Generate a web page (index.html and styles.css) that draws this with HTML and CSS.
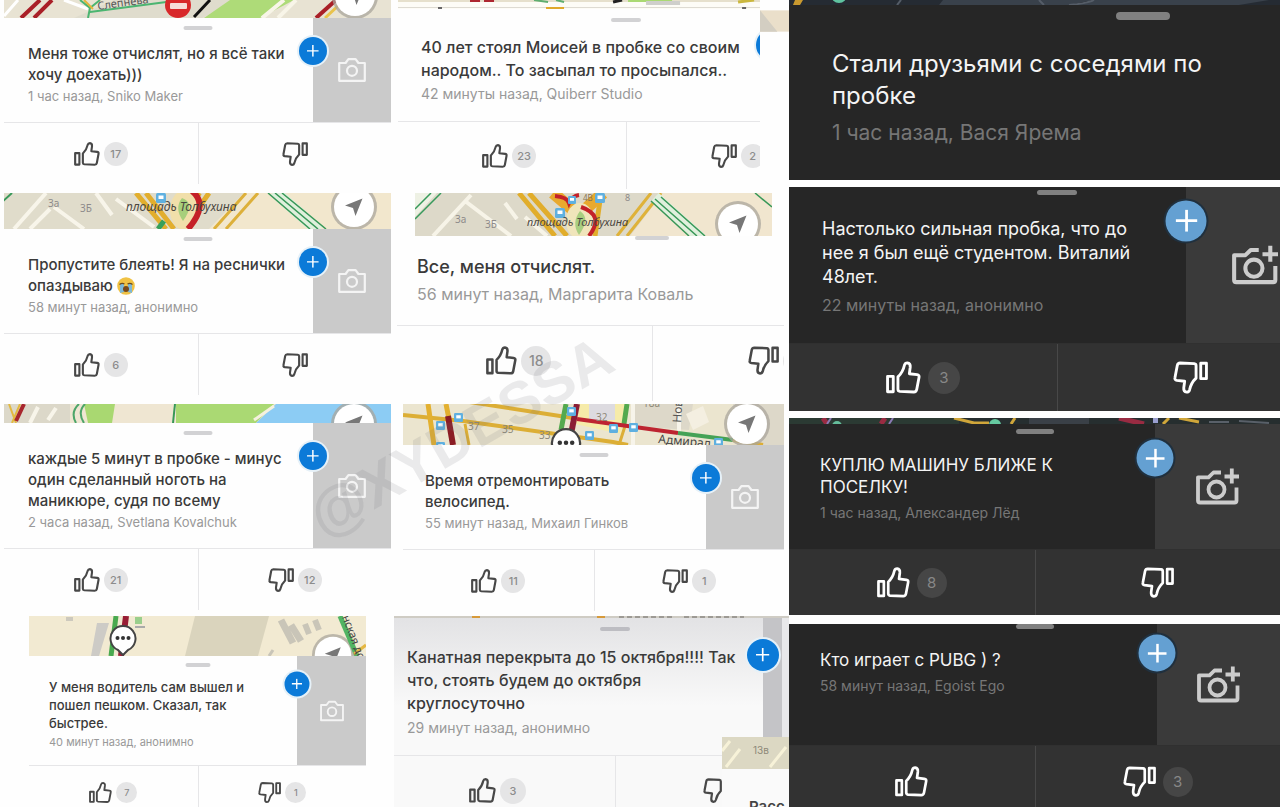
FILE: index.html
```html
<!DOCTYPE html>
<html lang="ru">
<head>
<meta charset="utf-8">
<meta name="viewport" content="width=device-width, initial-scale=1">
<title>Разговорчики</title>
<link rel="stylesheet" href="styles.css">
</head>
<body>
<svg class="defs" aria-hidden="true">
  <symbol id="thumb" viewBox="0 0 27 25">
    <g fill="none" stroke="currentColor" stroke-width="2.2" stroke-linejoin="round">
      <rect x="1.2" y="11.600" width="4.400" height="11.900"/>
      <path d="M9.200 12Q13 8.500 14.200 3Q14.700 1.200 16.500 1.200Q19 1.500 18.700 4.500L18 9.600L24 10.300Q25.900 10.600 25.500 12.300L23.700 21.800Q23.300 23.700 21.500 23.700L10.600 23.200Q9.200 23 9.200 21.600Z"/>
    </g>
  </symbol>
  <symbol id="camera" viewBox="0 0 28 24">
    <g fill="none" stroke="currentColor" stroke-width="2.200" stroke-linejoin="round">
      <path d="M1.200 5H7.600L10.400 1.200H17.600L20.400 5H26.800V22.800H1.200Z"/>
      <circle cx="14" cy="12.800" r="5"/>
    </g>
  </symbol>
  <symbol id="camera-add" viewBox="0 0 43 36">
    <g fill="none" stroke="currentColor" stroke-width="3.800" stroke-linejoin="round">
      <path d="M25 4H17.500L12.500 8.800H2V32Q2 34 4 34H38.500Q40.500 34 40.500 32V19"/>
      <circle cx="20.500" cy="21" r="8"/>
      <path d="M28.500 8H43M35.800 0V15"/>
    </g>
  </symbol>
  <symbol id="plus" viewBox="0 0 12 12"><path d="M6 0V12M0 6H12" stroke="currentColor" stroke-width="1.500"/></symbol>
  <symbol id="locate" viewBox="0 0 46 46">
    <circle cx="23" cy="23" r="23" fill="#a9a69c" opacity=".75"/>
    <circle cx="23" cy="23" r="20" fill="#fff"/>
    <path d="M31.500 14.500L24.500 32L22 24L14 21.500Z" fill="#777"/>
  </symbol>
  <symbol id="stop" viewBox="0 0 10 10"><rect width="10" height="10" rx="1.500" fill="#5fb0e0"/><path d="M2.500 2.500H7.500V6H2.500Z" fill="#fff"/></symbol>
  <symbol id="talk" viewBox="0 0 28 32">
    <path d="M9 25A12.500 12.500 0 1 1 19 25L14 30Z" fill="#fff" stroke="#444" stroke-width="2" stroke-linejoin="round"/>
    <g fill="#333"><circle cx="8.500" cy="13" r="2"/><circle cx="14" cy="13" r="2"/><circle cx="19.500" cy="13" r="2"/></g>
  </symbol>
</svg>

<main class="collage">
  <section class="column">
    <article class="card">
      <svg class="map h18" viewBox="0 0 387 18" preserveAspectRatio="xMinYMin slice" aria-hidden="true">
        <rect width="387" height="18" fill="#e8e3d3"/>
        <path d="M70 18L110 0H235L198 18Z" fill="#dfdccd"/>
        <path d="M200 18L226 0H290L256 18Z" fill="#aedb78"/>
        <path d="M274 18L292 0M258 18L280 0" stroke="#f8f5e8" stroke-width="4"/>
        <path d="M17 18L36 0M30 18L48 0" stroke="#a91f27" stroke-width="4"/>
        <path d="M0 16L14 0M60 0L84 9" stroke="#fff" stroke-width="3"/>
        <path d="M76 0L86 8L84 18M86 8L96 0M86 12L170 1" stroke="#4bb571" stroke-width="2" fill="none"/>
        <path d="M80 0L89 9" stroke="#e3b53b" stroke-width="2"/>
        <path d="M190 17L206 0" stroke="#111" stroke-width="3"/>
        <text x="94" y="10" font-size="11" fill="#555" transform="rotate(-8 94 10)">Слепнёва</text>
        <circle cx="174" cy="5" r="13" fill="#d8282a"/><rect x="166" y="3" width="17" height="6" rx="1" fill="#f7dcd8"/>
        <path d="M312 18L332 0" stroke="#a91f27" stroke-width="4"/><path d="M321 18L336 4" stroke="#e9c34b" stroke-width="3"/>
        <use href="#locate" x="328" y="-27" width="46" height="46"/>
      </svg>
      <div class="body">
        <span class="handle"></span>
        <div class="text"><h2 class="title">Меня тоже отчислят, но я всё таки<br>хочу доехать)))</h2><p class="meta">1 час назад, Sniko Maker</p></div>
        <div class="photo"><button class="shot" aria-label="Добавить фото"><svg><use href="#camera"/></svg></button><button class="add" aria-label="Добавить"><svg><use href="#plus"/></svg></button></div>
      </div>
      <div class="votes">
        <button class="vote" aria-label="Нравится"><svg class="thumb"><use href="#thumb"/></svg><span class="count">17</span></button>
        <button class="vote" aria-label="Не нравится"><svg class="thumb down"><use href="#thumb"/></svg></button>
      </div>
    </article>

    <article class="card">
      <svg class="map h36" viewBox="0 0 387 36" preserveAspectRatio="xMinYMin slice" aria-hidden="true">
        <rect width="387" height="36" fill="#e0dccb"/>
        <path d="M240 0H387V36H205Z" fill="#f2e7cd"/>
        <path d="M10 36L42 0M26 36L46 16M92 0L108 22M112 6L150 34M50 14L80 36" stroke="#f8f5ea" stroke-width="4"/>
        <path d="M-3 10L8 0" stroke="#389858" stroke-width="2"/>
        <path d="M132 0L162 36M142 0L170 36M205 0L180 36M196 0L172 22" stroke="#e2ae2d" stroke-width="5"/>
        <ellipse cx="181" cy="17" rx="15" ry="20" fill="#f1dfaa"/><path d="M178 5Q192 10 179 28Q170 15 178 5Z" fill="#a7cf7b"/>
        <path d="M188 -2Q205 12 184 36" fill="none" stroke="#c42028" stroke-width="6"/>
        <path d="M154 36L160 28" stroke="#38a05a" stroke-width="5"/>
        <path d="M242 0L210 36M254 0L222 36" stroke="#ddb03a" stroke-width="3"/>
        <path d="M270 -2L315 38" stroke="#dff0dc" stroke-width="12"/><path d="M264 0L306 36M278 0L322 36M271 0L314 36" stroke="#389858" stroke-width="1.500"/>
        <use href="#stop" x="152" y="0" width="10" height="10"/>
        <text x="44" y="14" font-size="10" fill="#8d8a8a">3а</text><text x="76" y="19" font-size="10" fill="#8d8a8a">3Б</text>
        <text x="122" y="18" font-size="12" font-style="italic" fill="#4a4640">площадь Толбухина</text>
        <use href="#locate" x="327" y="-9" width="46" height="46"/>
      </svg>
      <div class="body">
        <span class="handle"></span>
        <div class="text"><h2 class="title">Пропустите блеять! Я на реснички<br>опаздываю <svg class="emoji" viewBox="0 0 18 18" role="img" aria-label="плачет"><circle cx="9" cy="9" r="8.800" fill="#f0c244"/><path d="M3 7.500Q5 5.500 7 7.500V15L3 16ZM11 7.500Q13 5.500 15 7.500V16L11 15Z" fill="#7db8d8"/><path d="M2.500 7.500Q5 5.500 7.500 7M10.500 7Q13 5.500 15.500 7.500" fill="none" stroke="#6c4a1c" stroke-width="1.200"/><ellipse cx="9" cy="12" rx="3" ry="3" fill="#77481b"/></svg></h2><p class="meta">58 минут назад, анонимно</p></div>
        <div class="photo"><button class="shot" aria-label="Добавить фото"><svg><use href="#camera"/></svg></button><button class="add" aria-label="Добавить"><svg><use href="#plus"/></svg></button></div>
      </div>
      <div class="votes">
        <button class="vote" aria-label="Нравится"><svg class="thumb"><use href="#thumb"/></svg><span class="count">6</span></button>
        <button class="vote" aria-label="Не нравится"><svg class="thumb down"><use href="#thumb"/></svg></button>
      </div>
    </article>

    <article class="card">
      <svg class="map h19" viewBox="0 0 387 19" preserveAspectRatio="xMinYMin slice" aria-hidden="true">
        <rect width="387" height="19" fill="#efe6d2"/>
        <rect width="66" height="19" fill="#dcd8c9"/>
        <path d="M26 19L34 3M44 16L52 4" stroke="#f8f5ea" stroke-width="4"/>
        <path d="M5 0L12 19M16 0L8 19" stroke="#e3b940" stroke-width="2"/><path d="M20 0L12 17" stroke="#a8262d" stroke-width="4"/>
        <path d="M80 0H111L108 19H84Z" fill="#a9d871"/><path d="M75 0Q66 8 72 19M81 0Q73 8 80 19" fill="none" stroke="#4da569" stroke-width="2"/>
        <path d="M172 0H270L252 19H172Z" fill="#aad973"/><path d="M171 0L169 19" stroke="#389858" stroke-width="2"/>
        <path d="M272 0H387V19H252Z" fill="#8cccf4"/><path d="M270 2L250 16" stroke="#f5f1df" stroke-width="3"/>
        <use href="#locate" x="327" y="-3" width="46" height="46"/>
      </svg>
      <div class="body">
        <span class="handle"></span>
        <div class="text"><h2 class="title">каждые 5 минут в пробке - минус<br>один сделанный ноготь на<br>маникюре, судя по всему</h2><p class="meta">2 часа назад, Svetlana Kovalchuk</p></div>
        <div class="photo"><button class="shot" aria-label="Добавить фото"><svg><use href="#camera"/></svg></button><button class="add" aria-label="Добавить"><svg><use href="#plus"/></svg></button></div>
      </div>
      <div class="votes tight">
        <button class="vote" aria-label="Нравится"><svg class="thumb"><use href="#thumb"/></svg><span class="count">21</span></button>
        <button class="vote" aria-label="Не нравится"><svg class="thumb down"><use href="#thumb"/></svg><span class="count">12</span></button>
      </div>
    </article>

    <article class="card small">
      <svg class="map h40" viewBox="0 0 337 40" preserveAspectRatio="xMinYMin slice" aria-hidden="true">
        <rect width="337" height="40" fill="#f2ead2"/>
        <path d="M166 0H240L229 40H156Z" fill="#dad4bd"/>
        <path d="M68 7H80L70 40H62Z" fill="#cdcbc6"/><rect x="37" y="1" width="7" height="4" fill="#cdc9bd"/>
        <path d="M87 0L82 40" stroke="#49a94f" stroke-width="5"/><path d="M97 0L92 40" stroke="#981d35" stroke-width="6"/>
        <rect x="106" y="1" width="7" height="7" fill="#9ace8b"/><path d="M106 11H116" stroke="#aaa" stroke-width="2"/>
        <path d="M252 4L264 27M262 9L272 25" stroke="#c9c5b8" stroke-width="7"/><path d="M276 8L280 18M286 4L290 14" stroke="#c9c5b8" stroke-width="6"/>
        <path d="M240 40L244 34" stroke="#c9c5b8" stroke-width="3"/>
        <use href="#talk" x="80" y="9" width="28" height="32"/>
        <use href="#locate" x="283" y="18" width="42" height="42"/>
        <path d="M311 0L328 40" stroke="#51b463" stroke-width="5"/><path d="M325 38L337 29" stroke="#e5b742" stroke-width="3"/>
        <text x="313" y="1" font-size="11" fill="#444" transform="rotate(69 313 1)">нская дор</text>
      </svg>
      <div class="body">
        <span class="handle"></span>
        <div class="text"><h2 class="title">У меня водитель сам вышел и<br>пошел пешком. Сказал, так<br>быстрее.</h2><p class="meta">40 минут назад, анонимно</p></div>
        <div class="photo"><button class="shot" aria-label="Добавить фото"><svg><use href="#camera"/></svg></button><button class="add" aria-label="Добавить"><svg><use href="#plus"/></svg></button></div>
      </div>
      <div class="votes">
        <button class="vote" aria-label="Нравится"><svg class="thumb"><use href="#thumb"/></svg><span class="count">7</span></button>
        <button class="vote" aria-label="Не нравится"><svg class="thumb down"><use href="#thumb"/></svg><span class="count">1</span></button>
      </div>
    </article>
  </section>

  <section class="column">
    <article class="card moses">
      <svg class="corner" viewBox="0 0 30 22" aria-hidden="true"><rect width="30" height="22" fill="#eadfca"/><path d="M0 0L18 22H0Z" fill="#d3cec2"/></svg>
      <div class="frame">
        <div class="wide">
          <svg class="map h9" viewBox="0 0 456 9" preserveAspectRatio="xMinYMin slice" aria-hidden="true">
            <rect width="456" height="9" fill="#fdfcf6"/><rect width="456" height="2" fill="#e6e0cc"/><rect y="7" width="365" height="1" fill="#dedbd2"/>
            <path d="M72 0H82M86 0H96" stroke="#ad2730" stroke-width="4"/><path d="M136 0L150 2M158 0L166 2" stroke="#5fae70" stroke-width="2"/>
            <path d="M215 2L224 0" stroke="#222" stroke-width="3"/><rect x="230" width="44" height="2" fill="#aad973"/><rect x="248" y="1" width="34" height="4" fill="#cfcfcb"/>
            <path d="M340 2L356 0" stroke="#cbb83d" stroke-width="3"/><rect x="148" y="7" width="18" height="2" fill="#e0a92b"/><path d="M40 8H44M344 8H348" stroke="#666" stroke-width="2"/>
          </svg>
          <div class="body">
            <span class="handle"></span>
            <div class="text"><h2 class="title">40 лет стоял Моисей в пробке со своим<br>народом.. То засыпал то просыпался..</h2><p class="meta">42 минуты назад, Quiberr Studio</p></div>
            <div class="photo"><button class="add" aria-label="Добавить"><svg><use href="#plus"/></svg></button></div>
          </div>
          <div class="votes">
            <button class="vote" aria-label="Нравится"><svg class="thumb"><use href="#thumb"/></svg><span class="count">23</span></button>
            <button class="vote" aria-label="Не нравится"><svg class="thumb down"><use href="#thumb"/></svg><span class="count">2</span></button>
          </div>
        </div>
      </div>
    </article>

    <article class="card expelled">
      <svg class="map h43" viewBox="0 0 357 43" preserveAspectRatio="xMinYMin slice" aria-hidden="true">
        <rect width="357" height="43" fill="#ddd9c9"/>
        <path d="M248 0H357V43H215Z" fill="#f1e6cf"/>
        <path d="M0 10V0H22L0 24Z" fill="#eef1e4"/><path d="M0 16L16 0M0 26L26 0" stroke="#379a5b" stroke-width="1.500"/>
        <path d="M18 43L56 2M90 10L102 26M50 8L96 43M110 24L132 43" stroke="#f7f4e8" stroke-width="4"/>
        <path d="M104 0L140 43M114 0L152 43M186 0L180 43" stroke="#e1ad2b" stroke-width="5"/><path d="M138 0L164 22L188 0" stroke="#e8a92e" stroke-width="12" fill="none"/>
        <ellipse cx="165" cy="28" rx="14" ry="18" fill="#f0e5bb"/><path d="M165 18Q176 25 164 42Q156 30 165 18Z" fill="#a8ce80"/>
        <path d="M140 3Q152 4 154 10Q157 3 164 2M166 14Q190 22 174 43" fill="none" stroke="#c32129" stroke-width="4"/>
        <path d="M236 0L202 43M246 0L212 43" stroke="#dfb239" stroke-width="3"/>
        <path d="M240 4L286 45" stroke="#e0f0dd" stroke-width="11"/><path d="M236 8L274 43M246 4L290 43M240 6L282 43M340 0L357 14" stroke="#389858" stroke-width="1.500"/>
        <use href="#stop" x="140" y="15" width="10" height="10"/><use href="#stop" x="180" y="0" width="10" height="10"/><use href="#stop" x="153" y="3" width="8" height="8"/>
        <text x="40" y="30" font-size="10" fill="#8d8a8a">3а</text><text x="70" y="35" font-size="10" fill="#8d8a8a">3Б</text><text x="210" y="8" font-size="9" fill="#8d8a8a">8</text><text x="168" y="8" font-size="8" fill="#8a7350">4В</text>
        <text x="112" y="33" font-size="11" font-style="italic" fill="#4a4640">площадь Толбухина</text>
        <use href="#locate" x="300" y="8" width="46" height="46"/>
      </svg>
      <div class="frame">
        <div class="wide">
          <div class="body">
            <span class="handle"></span>
            <div class="text"><h2 class="title">Все, меня отчислят.</h2><p class="meta">56 минут назад, Маргарита Коваль</p></div>
          </div>
          <div class="votes">
            <button class="vote" aria-label="Нравится"><svg class="thumb"><use href="#thumb"/></svg><span class="count">18</span></button>
            <button class="vote" aria-label="Не нравится"><svg class="thumb down"><use href="#thumb"/></svg><span class="count"></span></button>
          </div>
        </div>
      </div>
    </article>

    <article class="card bike">
      <svg class="map h41" viewBox="0 0 381 41" preserveAspectRatio="xMinYMin slice" aria-hidden="true">
        <rect width="381" height="41" fill="#ebe5cf"/>
        <path d="M175 0H222L218 30L172 20Z" fill="#f6eba9"/><rect x="186" y="0" width="26" height="16" fill="#dddbe0"/>
        <path d="M230 0H290L286 26L228 22ZM330 0H381V41H334Z" fill="#ddd8c9"/>
        <path d="M0 11L60 17L210 38L225 41M60 -3L170 14" stroke="#dcae35" stroke-width="4" fill="none"/>
        <path d="M25 0L31 41M43 0L46 15" stroke="#e3b02f" stroke-width="5"/><path d="M45 12L50 41" stroke="#8b1d25" stroke-width="6"/>
        <path d="M62 20L66 41M222 22L216 41" stroke="#dcae35" stroke-width="3"/>
        <path d="M163 0L158 26M224 0L221 20" stroke="#54a94e" stroke-width="5"/><path d="M174 0L168 30" stroke="#8b1d35" stroke-width="6"/>
        <path d="M230 0V41M276 0V28" stroke="#f7f4ea" stroke-width="4"/><path d="M283 10L300 2L306 18L290 26" fill="#f4efe1"/>
        <path d="M174 15L275 29" stroke="#bd2431" stroke-width="4"/><path d="M275 29L330 36" stroke="#45a256" stroke-width="4"/><path d="M330 36L360 41" stroke="#dcae35" stroke-width="4"/>
        <use href="#stop" x="33" y="17" width="9" height="9"/><use href="#stop" x="51" y="9" width="9" height="9"/><use href="#stop" x="164" y="3" width="9" height="9"/><use href="#stop" x="182" y="27" width="9" height="9"/><use href="#stop" x="206" y="20" width="9" height="9"/><use href="#stop" x="226" y="19" width="9" height="9"/><use href="#stop" x="311" y="34" width="9" height="9"/><use href="#stop" x="33" y="38" width="9" height="9"/>
        <g font-size="10" fill="#8d8878"><text x="65" y="26">37</text><text x="99" y="29">35</text><text x="136" y="35">33</text><text x="193" y="17">32</text><text x="240" y="3">18а</text></g>
        <text x="255" y="39" font-size="12" fill="#444" transform="rotate(5 255 39)">Адмирал</text>
        <text x="278" y="19" font-size="12" fill="#555" transform="rotate(-86 278 19)">Нов</text>
        <use href="#talk" x="147" y="24" width="32" height="36"/>
        <use href="#locate" x="321" y="-3" width="46" height="46"/>
      </svg>
      <div class="body">
        <span class="handle"></span>
        <div class="text"><h2 class="title">Время отремонтировать<br>велосипед.</h2><p class="meta">55 минут назад, Михаил Гинков</p></div>
        <div class="photo"><button class="shot" aria-label="Добавить фото"><svg><use href="#camera"/></svg></button><button class="add" aria-label="Добавить"><svg><use href="#plus"/></svg></button></div>
      </div>
      <div class="votes">
        <button class="vote" aria-label="Нравится"><svg class="thumb"><use href="#thumb"/></svg><span class="count">11</span></button>
        <button class="vote" aria-label="Не нравится"><svg class="thumb down"><use href="#thumb"/></svg><span class="count">1</span></button>
      </div>
    </article>

    <article class="card closed">
      <svg class="map h2" viewBox="0 0 395 2" preserveAspectRatio="xMinYMin slice" aria-hidden="true">
        <rect width="395" height="2" fill="#cfccc4"/><rect x="78" width="8" height="2" fill="#d79a3a"/><rect x="203" width="8" height="2" fill="#d79a3a"/><path d="M225 1H280M290 1H350" stroke="#9d9a94" stroke-width="2" stroke-dasharray="5 3"/>
      </svg>
      <div class="body">
        <span class="handle"></span>
        <div class="text"><h2 class="title">Канатная перекрыта до 15 октября!!!! Так<br>что, стоять будем до октября<br>круглосуточно</h2><p class="meta">29 минут назад, анонимно</p></div>
        <div class="photo"><button class="add" aria-label="Добавить"><svg><use href="#plus"/></svg></button></div>
      </div>
      <div class="votes">
        <button class="vote" aria-label="Нравится"><svg class="thumb"><use href="#thumb"/></svg><span class="count">3</span></button>
        <button class="vote" aria-label="Не нравится"><svg class="thumb down"><use href="#thumb"/></svg></button>
      </div>
      <div class="scrap">
        <svg viewBox="0 0 67 32" aria-hidden="true"><rect width="67" height="32" fill="#dcd8c3"/><path d="M0 14L8 4M4 30L18 12M48 30L64 10" stroke="#f7f2d8" stroke-width="3"/><text x="31" y="17" font-size="10" fill="#8d8878">13в</text></svg>
        <p class="scrap-text">Расс</p>
      </div>
    </article>
  </section>

  <section class="column dark">
    <article class="card friends">
      <svg class="map h5" viewBox="0 0 491 5" preserveAspectRatio="xMinYMin slice" aria-hidden="true">
        <rect width="491" height="5" fill="#252b33"/><path d="M150 5L154 0H480L450 5Z" fill="#39414b"/><path d="M4 5L6 0H14L11 5Z" fill="#c9992f"/><circle cx="50" cy="-5" r="8" fill="#5fc3a0"/><path d="M108 5L112 0M250 0L255 5M280 5Q300 3 305 0" stroke="#555d68" stroke-width="2"/>
      </svg>
      <div class="body">
        <span class="handle"></span>
        <div class="text"><h2 class="title">Стали друзьями с соседями по<br>пробке</h2><p class="meta">1 час назад, Вася Ярема</p></div>
      </div>
    </article>

    <article class="card student">
      <div class="wide">
        <div class="body">
          <span class="handle"></span>
          <div class="text"><h2 class="title">Настолько сильная пробка, что до<br>нее я был ещё студентом. Виталий<br>48лет.</h2><p class="meta">22 минуты назад, анонимно</p></div>
          <div class="photo"><button class="shot" aria-label="Добавить фото"><svg><use href="#camera-add"/></svg></button><button class="add" aria-label="Добавить"><svg><use href="#plus"/></svg></button></div>
        </div>
        <div class="votes">
          <button class="vote" aria-label="Нравится"><svg class="thumb"><use href="#thumb"/></svg><span class="count">3</span></button>
          <button class="vote" aria-label="Не нравится"><svg class="thumb down"><use href="#thumb"/></svg></button>
        </div>
      </div>
    </article>

    <article class="card village">
      <svg class="map h6" viewBox="0 0 491 6" preserveAspectRatio="xMinYMin slice" aria-hidden="true">
        <rect width="491" height="6" fill="#262e2f"/><rect width="170" height="6" fill="#2b3a33"/><rect x="240" width="60" height="6" fill="#3a4047"/>
        <path d="M34 0L38 6M92 6L96 0M330 0L355 6" stroke="#992b42" stroke-width="5"/><path d="M38 6L42 0M100 6L104 0" stroke="#8b7ab5" stroke-width="2"/>
        <path d="M165 0L185 5H200M222 6L226 0M374 6L380 0M390 0L410 4" stroke="#d0a63a" stroke-width="3" fill="none"/><circle cx="48" cy="8" r="5" fill="#65bd9b"/><circle cx="206" cy="7" r="6" fill="#65c9a0"/><rect x="364" width="5" height="5" fill="#9a9fd0"/><path d="M420 4H440M450 3L480 5" stroke="#596069" stroke-width="2"/>
      </svg>
      <div class="body">
        <span class="handle"></span>
        <div class="text"><h2 class="title">КУПЛЮ МАШИНУ БЛИЖЕ К<br>ПОСЕЛКУ!</h2><p class="meta">1 час назад, Александер Лёд</p></div>
        <div class="photo"><button class="shot" aria-label="Добавить фото"><svg><use href="#camera-add"/></svg></button><button class="add" aria-label="Добавить"><svg><use href="#plus"/></svg></button></div>
      </div>
      <div class="votes">
        <button class="vote" aria-label="Нравится"><svg class="thumb"><use href="#thumb"/></svg><span class="count">8</span></button>
        <button class="vote" aria-label="Не нравится"><svg class="thumb down"><use href="#thumb"/></svg></button>
      </div>
    </article>

    <article class="card pubg">
      <div class="body">
        <span class="handle"></span>
        <div class="text"><h2 class="title">Кто играет с PUBG ) ?</h2><p class="meta">58 минут назад, Egoist Ego</p></div>
        <div class="photo"><button class="shot" aria-label="Добавить фото"><svg><use href="#camera-add"/></svg></button><button class="add" aria-label="Добавить"><svg><use href="#plus"/></svg></button></div>
      </div>
      <div class="votes">
        <button class="vote" aria-label="Нравится"><svg class="thumb"><use href="#thumb"/></svg></button>
        <button class="vote" aria-label="Не нравится"><svg class="thumb down"><use href="#thumb"/></svg><span class="count">3</span></button>
      </div>
    </article>
  </section>

  <div class="watermark" aria-hidden="true">@XYDESSA</div>
</main>
</body>
</html>
```

FILE: styles.css
```css
* { box-sizing: border-box; }

body {
  margin: 0;
  background: #fefefe;
  font-family: Inter, "Liberation Sans", sans-serif;
}

h2, p { margin: 0; }

button {
  margin: 0;
  padding: 0;
  border: 0;
  background: none;
  color: inherit;
  font: inherit;
  cursor: pointer;
}

.defs {
  position: absolute;
  width: 0;
  height: 0;
}

.collage {
  position: relative;
  display: grid;
  grid-template-columns: 392fr 397fr 491fr;
  height: 100vh;
  overflow: hidden;
}

.column { min-width: 0; }

/* Card: map strip, message, votes */
.card {
  --title: 15px;
  --line: 21px;
  --meta: 13px;
  --meta-line: 22px;
  --top: 25px;
  --bottom: 15px;
  --left: 24px;
  --photo: 78px;
  --add: 28px;
  --add-top: 33px;
  --handle: 29px;
  --handle-top: 8px;
  --votes: 62px;
  --thumb: 26px;
  --count: 24px;
  --count-text: 11px;
  --camera: 28px;
  position: relative;
  margin: 0 1px 9px 4px;
}

.map {
  display: block;
  width: 100%;
  font-family: "Noto Sans", sans-serif;
}
.h2 { height: 2px; }
.h5 { height: 5px; }
.h6 { height: 6px; }
.h9 { height: 9px; }
.h18 { height: 18px; }
.h19 { height: 19px; }
.h36 { height: 36px; }
.h40 { height: 40px; }
.h41 { height: 41px; }
.h43 { height: 43px; }

.body {
  position: relative;
  display: flex;
}

.handle {
  position: absolute;
  top: var(--handle-top);
  left: 50%;
  width: var(--handle);
  height: 4px;
  border-radius: 2px;
  background: #d2d2d4;
  transform: translateX(-50%);
}

.text {
  flex: 1;
  min-width: 0;
  padding: var(--top) 0 var(--bottom) var(--left);
  white-space: nowrap;
}

.title {
  font-size: var(--title);
  font-weight: 500;
  line-height: var(--line);
  color: #3a3a3a;
}

.meta {
  font-size: var(--meta);
  line-height: var(--meta-line);
  color: #999;
}

.emoji {
  width: 18px;
  height: 18px;
  vertical-align: -4px;
}

.photo {
  position: relative;
  flex: 0 0 var(--photo);
  background: #cacaca;
  color: #f4f4f4;
}

.shot {
  display: grid;
  place-items: center;
  width: 100%;
  height: 100%;
}
.shot svg {
  width: var(--camera);
  height: var(--camera);
}

.add {
  position: absolute;
  top: var(--add-top);
  left: 0;
  display: grid;
  place-items: center;
  width: var(--add);
  height: var(--add);
  border-radius: 50%;
  background: #0b7ad8;
  box-shadow: 0 0 0 2px #e6f1f8;
  color: #fff;
  transform: translate(-50%, -50%);
}
.add svg {
  width: 42%;
  height: 42%;
}

.votes {
  display: grid;
  grid-template-columns: 1fr 1fr;
  height: var(--votes);
  border-top: 1px solid #e6e6e8;
}

.vote {
  display: flex;
  align-items: center;
  justify-content: center;
  gap: 4px;
  color: #484848;
}
.vote + .vote { border-left: 1px solid #e6e6e8; }

.thumb {
  width: var(--thumb);
  height: var(--thumb);
}
.down { transform: rotate(180deg); }

.count {
  width: var(--count);
  height: var(--count);
  border-radius: 50%;
  background: #e5e5e6;
  color: #8c8c8c;
  font-size: var(--count-text);
  font-weight: 500;
  line-height: var(--count);
  text-align: center;
}

.votes.tight { margin-bottom: -3px; }

.small {
  --title: 13px;
  --line: 18px;
  --meta: 11px;
  --meta-line: 20px;
  --top: 22px;
  --bottom: 13px;
  --left: 20px;
  --photo: 69px;
  --add: 25px;
  --add-top: 28px;
  --handle: 25px;
  --handle-top: 7px;
  --votes: 54px;
  --thumb: 23px;
  --count: 21px;
  --count-text: 9px;
  --camera: 24px;
  margin: 0 26px 0 29px;
}

/* Middle column */
.frame { overflow: hidden; }

.moses {
  --title: 16px;
  --line: 23px;
  --meta: 14px;
  --meta-line: 24px;
  --top: 27px;
  --left: 23px;
  --photo: 82px;
  --add: 32px;
  --add-top: 36px;
  --handle: 30px;
  --handle-top: 9px;
  --votes: 68px;
  margin: 0 29px 4px 6px;
}
.moses .wide { width: 126%; }
.moses .vote { padding-right: 6px; }

.corner {
  position: absolute;
  top: 10px;
  left: 100%;
  width: 29px;
  height: 22px;
}

.expelled {
  --title: 18px;
  --line: 22px;
  --meta: 16px;
  --meta-line: 32px;
  --top: 20px;
  --bottom: 15px;
  --left: 20px;
  --handle: 34px;
  --handle-top: 0px;
  --votes: 76px;
  --thumb: 31px;
  --count: 30px;
  --count-text: 14px;
  margin: 0 5px 3px;
}
.expelled .map {
  width: auto;
  margin: 0 12px 0 18px;
}
.expelled .wide { width: 132%; }
.expelled .vote { padding-bottom: 6px; }
.expelled .vote:first-child { padding-right: 12px; }

.bike {
  --left: 22px;
  margin: 0 5px 5px 11px;
}

.closed {
  --title: 16px;
  --line: 23px;
  --meta: 14px;
  --meta-line: 25px;
  --top: 28px;
  --left: 13px;
  --photo: 26px;
  --add: 32px;
  --add-top: 37px;
  --handle: 30px;
  --handle-top: 9px;
  --votes: 70px;
  --thumb: 27px;
  --count: 26px;
  margin: 0 0 0 2px;
  background: linear-gradient(#e2e2e4, #f9f9f9 90px);
}
.closed .handle { left: 56%; background: #bdbdc2; }
.closed .photo {
  border-right: 7px solid #e8e8ea;
  background: #c4c4c7;
}
.closed .votes { grid-template-columns: 221fr 174fr; }
.closed .vote:first-child { padding-right: 14px; }
.closed .vote:last-child { padding-left: 28px; }

.scrap {
  position: absolute;
  top: 121px;
  right: 0;
  width: 67px;
}
.scrap svg {
  display: block;
  width: 100%;
}
.scrap-text {
  padding: 28px 0 0 27px;
  background: #fafafa;
  color: #444;
  font-size: 15px;
  font-weight: 600;
  line-height: 20px;
}

/* Dark column */
.dark .card {
  --thumb: 33px;
  --count: 30px;
  --count-text: 15px;
  --camera: 43px;
  --add: 37px;
  --add-top: 34px;
  --handle: 38px;
  --handle-top: 5px;
  --left: 31px;
  --title: 17px;
  --line: 22px;
  --meta: 14px;
  --meta-line: 30px;
  --top: 30px;
  --votes: 66px;
  margin: 0 0 7px;
  overflow: hidden;
  background: #262626;
}
.dark .title {
  font-weight: 400;
  color: #f4f4f4;
}
.dark .meta { color: #767676; }
.dark .handle {
  height: 5px;
  border-radius: 3px;
  background: #808080;
}
.dark .photo {
  background: #3a3a3a;
  color: #ccc;
}
.dark .add {
  background: #64a0d2;
  box-shadow: 0 0 0 2px #20303e;
}
.dark .add svg {
  width: 54%;
  height: 54%;
}
.dark .votes {
  border-top-color: #303030;
  background: #323232;
}
.dark .vote {
  gap: 7px;
  color: #fff;
}
.dark .vote + .vote { border-left-color: #484848; }
.dark .count {
  background: #464646;
  color: #888;
  font-weight: 400;
}

.dark .friends {
  --title: 24px;
  --line: 32px;
  --meta: 21px;
  --meta-line: 41px;
  --top: 43px;
  --bottom: 27px;
  --left: 43px;
  --handle: 54px;
  --handle-top: 7px;
}
.dark .friends .handle {
  left: 72%;
  height: 8px;
  border-radius: 4px;
}

.dark .student {
  --title: 18px;
  --line: 24px;
  --meta: 16px;
  --meta-line: 32px;
  --bottom: 22px;
  --left: 33px;
  --photo: 138px;
  --add: 41px;
  --handle: 40px;
  --handle-top: 3px;
  --votes: 68px;
  --thumb: 35px;
  --count: 32px;
  --camera: 46px;
}
.student .wide { width: 109%; }

.dark .village {
  --bottom: 21px;
  --photo: 125px;
  margin-bottom: 9px;
}

.dark .pubg {
  --top: 25px;
  --bottom: 44px;
  --add-top: 29px;
  --handle-top: 0px;
  --photo: 123px;
  --votes: 72px;
  margin-bottom: 0;
}

.watermark {
  position: absolute;
  top: 437px;
  left: 36%;
  color: rgba(110, 110, 120, 0.14);
  font: bold 59px/1 "Liberation Sans", sans-serif;
  transform: translate(-50%, -50%) rotate(-30deg);
  pointer-events: none;
}
```
